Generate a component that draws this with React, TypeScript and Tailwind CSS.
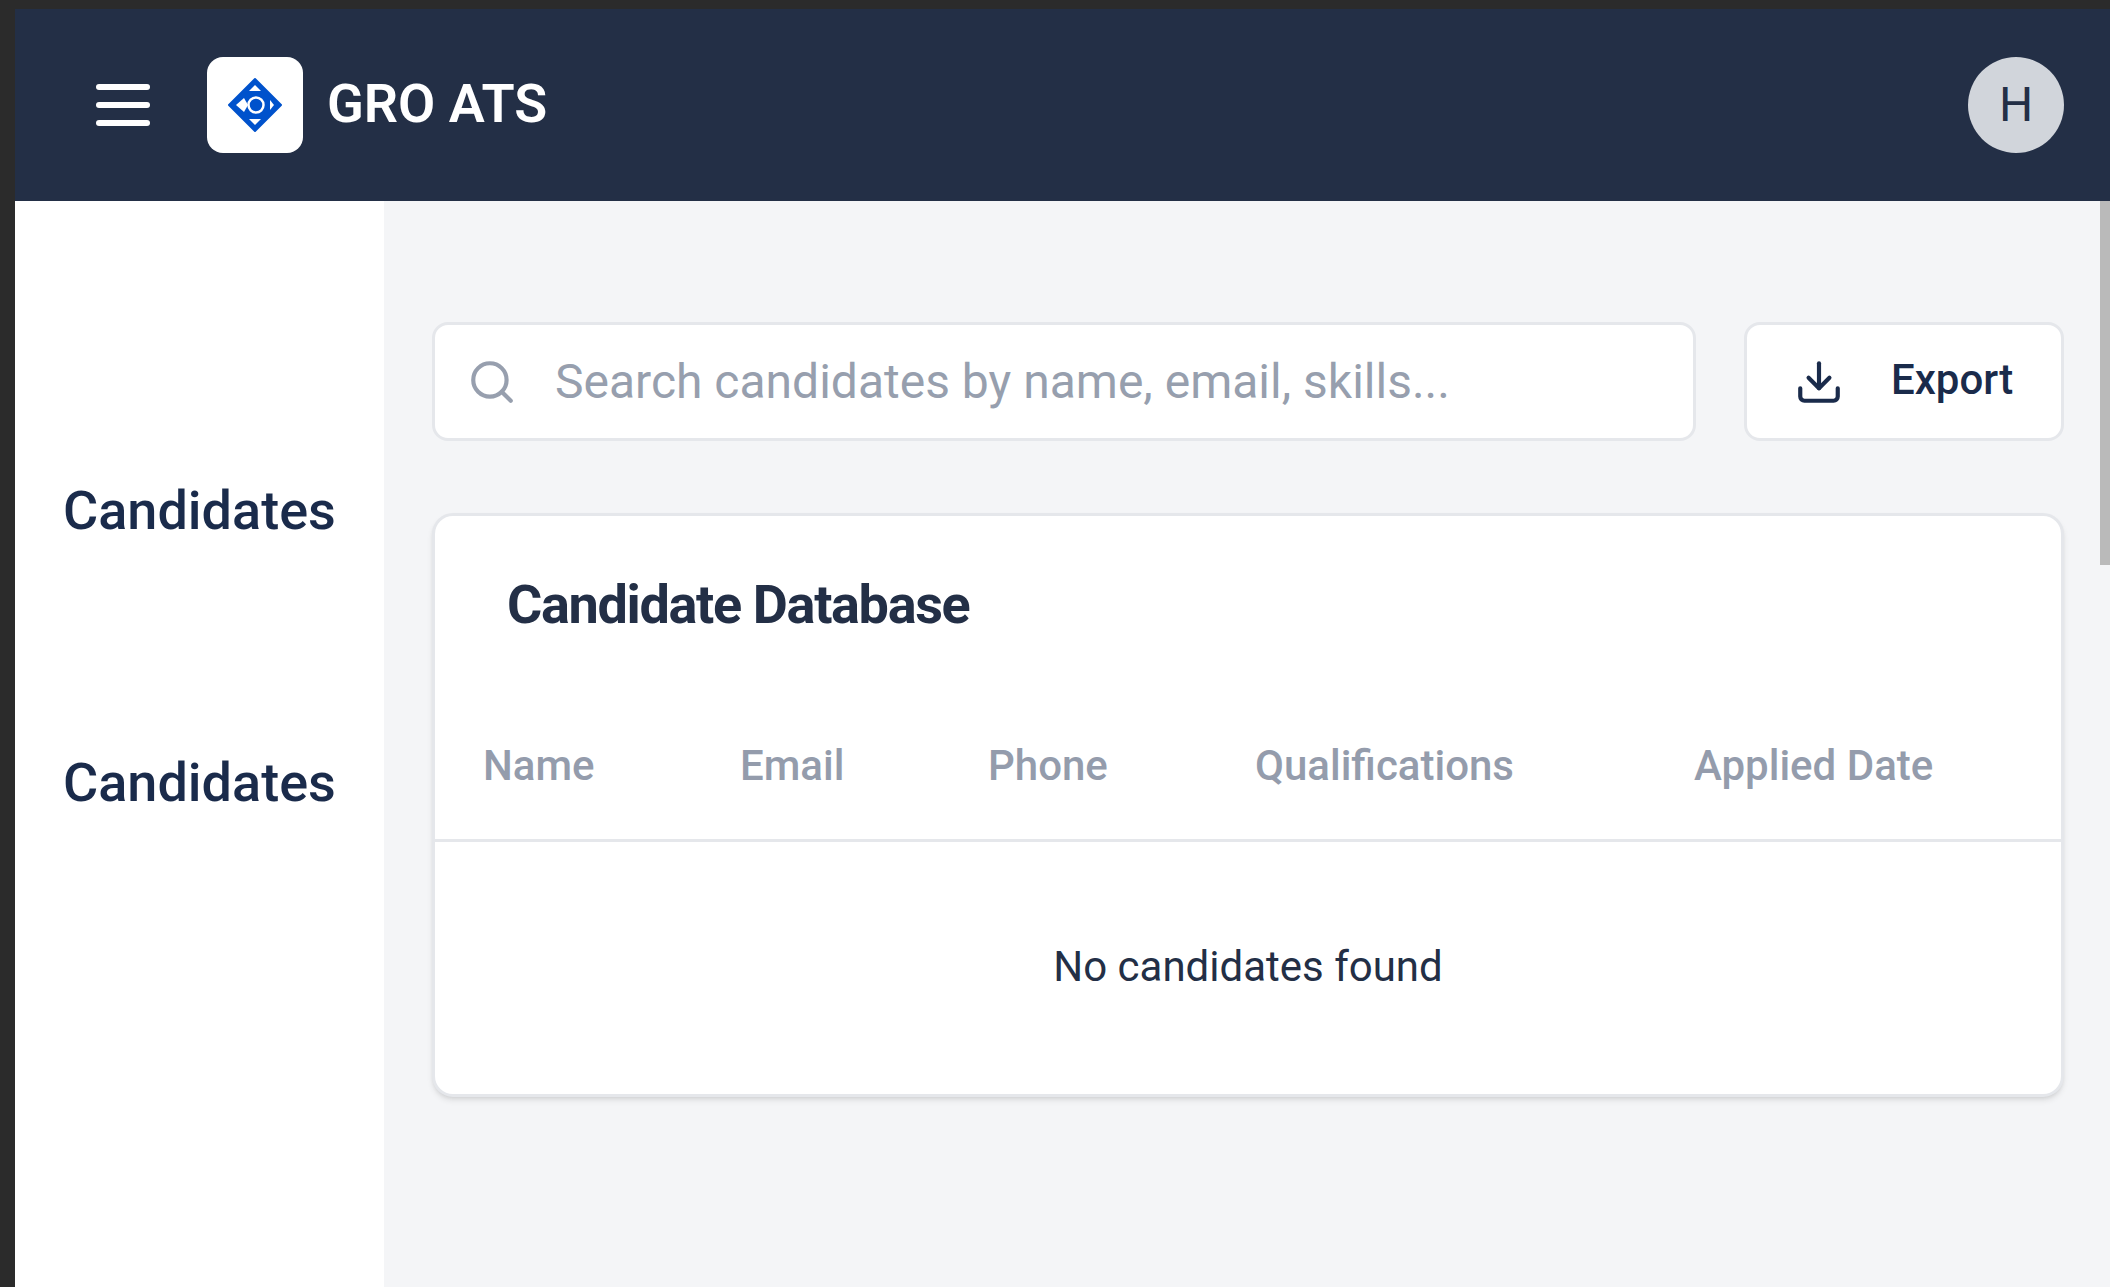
import { Download, Search } from 'lucide-react'

const columns = ['Name', 'Email', 'Phone', 'Qualifications', 'Applied Date']

function Logo() {
	return (
		<svg viewBox="-28 -28 56 56" className="w-[56px] h-[56px]">
			<polygon points="0,-26 26,0 0,26 -26,0" fill="#0052cc" stroke="#0052cc" strokeWidth="2" strokeLinejoin="round" />
			<polygon points="0,-20 -6,-14 6,-14" fill="#fff" />
			<polygon points="0,20 -6,14 6,14" fill="#fff" />
			<polygon points="15,-5 19,0 15,5" fill="#fff" />
			<polygon points="-19,0 -11,-7 -7,0 -11,7" fill="#fff" />
			<circle cx="1" cy="0" r="7.5" fill="#0052cc" stroke="#fff" strokeWidth="2.5" />
		</svg>
	)
}

function Header() {
	return (
		<header className="flex items-center justify-between h-[192px] shrink-0 bg-[#232f46] pl-[81px] pr-[46px]">
			<div className="flex items-center">
				<div className="flex flex-col gap-[12px] w-[54px]">
					<span className="h-[6px] rounded-full bg-white" />
					<span className="h-[6px] rounded-full bg-white" />
					<span className="h-[6px] rounded-full bg-white" />
				</div>
				<div className="flex items-center justify-center w-[96px] h-[96px] ml-[57px] rounded-[16px] bg-white">
					<Logo />
				</div>
				<span className="ml-[24px] pb-[2px] text-[54px] leading-none font-semibold text-white">GRO ATS</span>
			</div>
			<div className="flex items-center justify-center w-[96px] h-[96px] rounded-full bg-[#d1d5db] text-[48px] text-[#232f46]">
				H
			</div>
		</header>
	)
}

function Sidebar() {
	return (
		<aside className="flex flex-col w-[369px] shrink-0 bg-white pt-[283px] pl-[48px] gap-[218px] text-[54px] leading-[54px] font-medium text-[#1a2b4b]">
			<span>Candidates</span>
			<span>Candidates</span>
		</aside>
	)
}

function Toolbar() {
	return (
		<div className="flex gap-[48px]">
			<div className="flex flex-1 items-center h-[119px] pl-[32px] border-[3px] border-[#e5e7eb] rounded-[16px] bg-white">
				<Search size={50} strokeWidth={2} className="text-[#979fae]" />
				<span className="ml-[38px] text-[48px] text-[#979fae]">Search candidates by name, email, skills...</span>
			</div>
			<div className="flex items-center w-[320px] h-[119px] pl-[47px] border-[3px] border-[#e5e7eb] rounded-[16px] bg-white text-[#1a2b4b]">
				<Download size={50} strokeWidth={2} />
				<span className="ml-[47px] pb-[5px] text-[42px] font-medium">Export</span>
			</div>
		</div>
	)
}

function CandidateTable() {
	return (
		<section className="flex flex-col h-[584px] mt-[72px] border-[3px] border-[#e5e7eb] rounded-[21px] bg-white shadow-md">
			<h2 className="pt-[61px] pl-[72px] text-[54px] leading-[56px] font-bold tracking-tight text-[#232f46]">Candidate Database</h2>
			<div className="grid grid-cols-[257px_248px_267px_439px_1fr] h-[101px] mt-[108px] items-start border-b-[3px] border-[#e5e7eb] pl-[48px] text-[42px] leading-[50px] font-medium text-[#949cac]">
				{columns.map((name) => (
					<span key={name}>{name}</span>
				))}
			</div>
			<div className="flex flex-1 items-center justify-center pb-[3px] text-[42px] text-[#232f46]">No candidates found</div>
		</section>
	)
}

export default function App() {
	return (
		<div className="flex flex-col w-screen h-screen overflow-hidden bg-[#2b2b2b] pt-[9px] pl-[15px] font-['Roboto',sans-serif]">
			<Header />
			<div className="flex flex-1 min-h-0">
				<Sidebar />
				<main className="flex-1 bg-[#f4f5f7] pt-[121px] pl-[48px] pr-[36px]">
					<Toolbar />
					<CandidateTable />
				</main>
				<div className="w-[10px] shrink-0 bg-[#f4f5f7]">
					<div className="h-[364px] bg-[#bababa]" />
				</div>
			</div>
		</div>
	)
}
